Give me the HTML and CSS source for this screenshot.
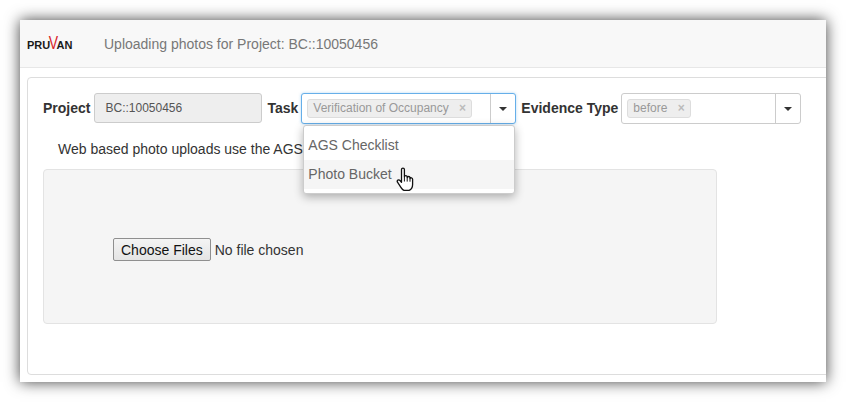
FILE: index.html
```html
<!DOCTYPE html>
<html lang="en">
<head>
    <meta charset="UTF-8">
    <title>Uploading photos</title>
    <link rel="stylesheet" href="styles.css">
</head>
<body>

    <div class="window">
        <div class="navbar">
            <div class="logo">PRU<span class="logo-v">V</span>AN</div>
            <div class="navbar-title">Uploading photos for Project: BC::10050456</div>
        </div>

        <div class="panel">
            <div class="filter-row">
                <label class="filter-label">Project</label>
                <div class="project-input">BC::10050456</div>

                <label class="filter-label">Task</label>
                <div class="select-wrap task-select">
                    <div class="select-box is-open">
                        <div class="select-value">
                            <span class="tag">Verification of Occupancy <span class="tag-x">&times;</span></span>
                        </div>
                        <div class="select-toggle"><span class="caret"></span></div>
                    </div>
                    <!-- Task dropdown -->
                    <div class="select-menu">
                        <div class="select-item">AGS Checklist</div>
                        <div class="select-item is-hover">Photo Bucket</div>
                    </div>
                    <svg class="hand-cursor" width="20" height="25" viewBox="0 0 20 25">
                        <path d="M5.500 2.600c0-2 2.900-2 2.900 0v7.200c.1-1.600 2.700-1.600 2.800 0v.8c.2-1.500 2.700-1.500 2.800.1v.9c.3-1.300 2.600-1.100 2.600.6v5.300c0 2.700-1.500 5-3.500 5.900H7.900c-1.400-.6-2.200-1.800-3-3.100L1.500 15.200c-1-1.800 1.200-3.100 2.500-1.700l1.500 1.800z" fill="#fff" stroke="#111" stroke-width="1.300" stroke-linejoin="round"/>
                        <path d="M8.400 10v4.500M11.200 10.600v4M14 11.500v3.200" fill="none" stroke="#111" stroke-width="1"/>
                    </svg>
                </div>

                <label class="filter-label">Evidence Type</label>
                <div class="select-wrap evidence-select">
                    <div class="select-box">
                        <div class="select-value">
                            <span class="tag">before <span class="tag-x">&times;</span></span>
                        </div>
                        <div class="select-toggle"><span class="caret"></span></div>
                    </div>
                </div>
            </div>

            <p class="upload-note">Web based photo uploads use the AGS</p>

            <div class="well">
                <button class="file-btn">Choose Files</button>
                <span class="file-status">No file chosen</span>
            </div>
        </div>
    </div>

</body>
</html>
```

FILE: styles.css
```css
body {
    font-family: 'Liberation Sans', Arial, sans-serif;
    font-size: 14px;
    color: #333;
    margin: 0;
    padding: 20px;
    background-color: #fff;
    overflow: hidden;
}
.window {
    width: 806px;
    height: 362px;
    box-sizing: border-box;
    background-color: #fff;
    box-shadow: 0 0 14px rgba(0, 0, 0, 0.75);
    overflow: hidden;
}
/* Top bar */
.navbar {
    display: flex;
    align-items: center;
    height: 47px;
    background-color: #f8f8f8;
    border-bottom: 1px solid #e7e7e7;
}
.logo {
    width: 84px;
    padding-left: 7px;
    box-sizing: border-box;
    font-size: 11px;
    font-weight: bold;
    color: #1a1a1a;
    position: relative;
    top: 1px;
}
.logo-v {
    display: inline-block;
    margin: 0 -1.500px;
    color: #d9252a;
    font-size: 14px;
    font-weight: normal;
    line-height: 10px;
    transform: translateY(-1px) scaleY(1.250);
}
.navbar-title {
    font-size: 14px;
    color: #777;
}
/* Main panel */
.panel {
    width: 830px;
    height: 298px;
    box-sizing: border-box;
    margin: 9px 0 0 7px;
    padding: 15px;
    background-color: #fff;
    border: 1px solid #ddd;
    border-radius: 4px;
}
.filter-row {
    display: flex;
    align-items: center;
    height: 30px;
}
.filter-label {
    font-weight: bold;
    color: #333;
}
.project-input {
    width: 168px;
    height: 30px;
    box-sizing: border-box;
    margin: 0 5px 0 4px;
    padding: 0 10px;
    line-height: 28px;
    font-size: 12px;
    color: #555;
    background-color: #eee;
    border: 1px solid #ccc;
    border-radius: 3px;
}
.select-wrap {
    position: relative;
    align-self: flex-start;
    margin-left: 3px;
}
.task-select {
    width: 215px;
    margin-right: 5px;
}
.evidence-select {
    width: 180px;
}
.select-box {
    display: flex;
    height: 31px;
    box-sizing: border-box;
    background-color: #fff;
    border: 1px solid #ccc;
    border-radius: 3px;
}
.select-box.is-open {
    border-color: #66afe9;
    box-shadow: 0 0 3px rgba(102, 175, 233, 0.5);
}
.select-value {
    flex: 1;
    padding: 5px 5px 4px;
}
.select-toggle {
    display: flex;
    align-items: center;
    justify-content: center;
    width: 24px;
    border-left: 1px solid #ccc;
}
.caret {
    width: 0;
    height: 0;
    border-top: 4px solid #333;
    border-left: 4px solid transparent;
    border-right: 4px solid transparent;
}
.tag {
    display: inline-block;
    height: 19px;
    box-sizing: border-box;
    padding: 0 5px;
    line-height: 17px;
    font-size: 12px;
    color: #999;
    background-color: #eee;
    border: 1px solid #ddd;
    border-radius: 3px;
}
.tag-x {
    margin-left: 7px;
    font-weight: bold;
    color: #bbb;
}
.select-menu {
    position: absolute;
    top: 32px;
    left: 2px;
    width: 212px;
    height: 69px;
    box-sizing: border-box;
    padding-top: 5px;
    background-color: #fff;
    border: 1px solid #ccc;
    border-radius: 3px;
    box-shadow: 0 3px 10px rgba(0, 0, 0, 0.3);
    z-index: 10;
}
.select-item {
    height: 29px;
    padding: 0 4px;
    line-height: 29px;
    color: #666;
}
.select-item.is-hover {
    background-color: #f5f5f5;
}
.hand-cursor {
    position: absolute;
    top: 74px;
    left: 95px;
    z-index: 11;
}
.upload-note {
    margin: 18px 0 0 15px;
    height: 16px;
    line-height: 16px;
}
/* Upload area */
.well {
    display: flex;
    align-items: center;
    width: 674px;
    height: 155px;
    box-sizing: border-box;
    margin-top: 12px;
    padding: 6px 0 0 69px;
    background-color: #f5f5f5;
    border: 1px solid #e3e3e3;
    border-radius: 4px;
}
.file-btn {
    height: 23px;
    padding: 0 7px;
    font-family: 'Liberation Sans', Arial, sans-serif;
    font-size: 14px;
    color: #111;
    background-color: #efefef;
    background-image: linear-gradient(#f4f4f4, #e4e4e4);
    border: 1px solid #8f8f8f;
    border-radius: 2px;
}
.file-status {
    margin-left: 4px;
    color: #333;
}
```
